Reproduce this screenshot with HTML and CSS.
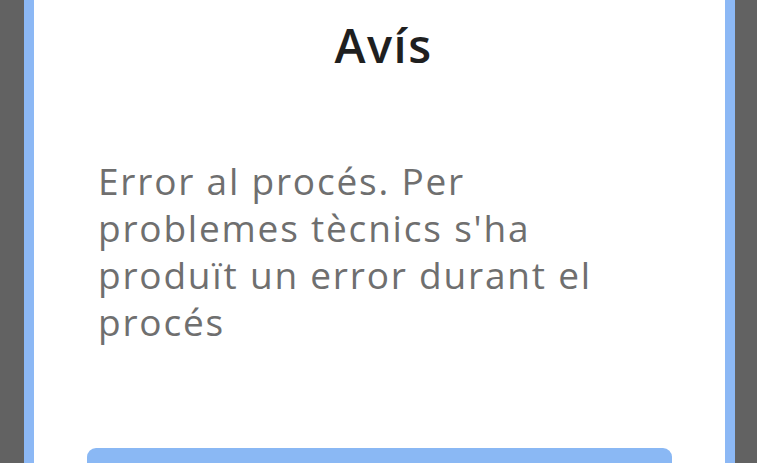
FILE: index.html
```html
<!DOCTYPE html>
<html lang="ca">
<head>
<meta charset="utf-8">
<link rel="stylesheet" href="styles.css">
</head>
<body>
<div class="page">
  <div class="card">
    <h1 class="title">Avís</h1>
    <p class="message">Error al procés. Per problemes tècnics s'ha produït un error durant el procés</p>
    <button class="btn" type="button"></button>
  </div>
</div>
</body>
</html>
```
FILE: styles.css
```css
html, body {
  margin: 0;
  padding: 0;
  height: 100%;
  background: #626262;
  overflow: hidden;
}
.page {
  height: 100%;
  padding: 0 22px 0 24px;
}
.card {
  height: 100%;
  box-sizing: border-box;
  background: #ffffff;
  border-left: 10px solid #8cb8f5;
  border-right: 10px solid #8cb8f5;
  display: flex;
  flex-direction: column;
  padding: 0 53px;
}
.title {
  margin: 13px 0 0;
  padding-left: 8px;
  text-align: center;
  font-family: "Open Sans", "DejaVu Sans", sans-serif;
  font-weight: 600;
  font-size: 47px;
  letter-spacing: 1.5px;
  line-height: 64px;
  color: #1f1f1f;
}
.message {
  margin: 80px 0 0;
  padding: 0 50px 0 11px;
  font-family: "Open Sans", "DejaVu Sans", sans-serif;
  font-weight: 400;
  font-size: 37px;
  letter-spacing: 1.8px;
  line-height: 47px;
  color: #6f6f6f;
}
.btn {
  margin-top: auto;
  height: 15px;
  border: 0;
  border-radius: 9px 9px 0 0;
  background: #8ab8f4;
  padding: 0;
}
```
